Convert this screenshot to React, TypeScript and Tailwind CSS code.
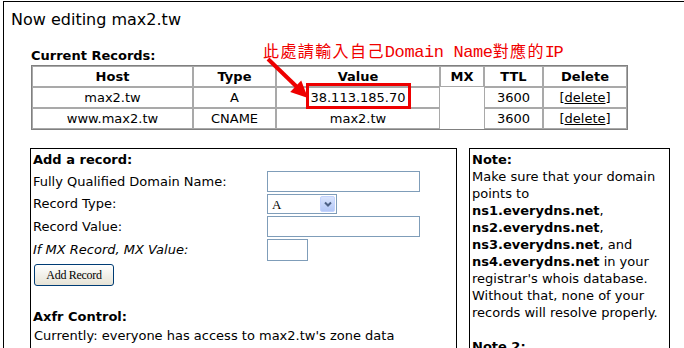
const cellBase = "border border-[#a9a9a9] h-[21px] p-0 text-center align-middle";

const records = [
  { host: "max2.tw", type: "A", value: "38.113.185.70", ttl: "3600" },
  { host: "www.max2.tw", type: "CNAME", value: "max2.tw", ttl: "3600" },
];

const noteLines: React.ReactNode[] = [
  <b>Note:</b>,
  "Make sure that your domain",
  "points to",
  <><b>ns1.everydns.net</b>,</>,
  <><b>ns2.everydns.net</b>,</>,
  <><b>ns3.everydns.net</b>, and</>,
  <><b>ns4.everydns.net</b> in your</>,
  "registrar's whois database.",
  "Without that, none of your",
  "records will resolve properly.",
  "\u00a0",
  <b>Note 2:</b>,
];

function SelectBox() {
  return (
    <div className="w-[70px] h-[20px] border border-[#7f9db9] bg-white flex items-center justify-between pl-[4px] pr-[1px]">
      <span className="font-['Liberation_Serif'] text-[13px] leading-none">A</span>
      <div className="w-[15px] h-[16px] rounded-[2px] bg-gradient-to-b from-[#d9e4fd] to-[#b4c8f7] border border-[#c3d3fd] flex items-center justify-center">
        <svg width="8" height="6" viewBox="0 0 8 6">
          <path d="M1 1.5 L4 4.5 L7 1.5" stroke="#4d6185" strokeWidth="2" fill="none" />
        </svg>
      </div>
    </div>
  );
}

function TextBox({ w, h }: { w: number; h: number }) {
  return (
    <div
      className="border border-[#7f9db9] bg-white"
      style={{ width: w, height: h }}
    />
  );
}

export default function App() {
  return (
    <div className="w-[684px] h-[348px] overflow-hidden bg-white relative font-['DejaVu_Sans',sans-serif] text-black">
      <div className="ml-[3px] mt-[1px] border-l border-t border-black h-[347px]">
        <h1 className="pl-[7px] pt-[8px] text-[16px] leading-[20px] font-normal">
          Now editing max2.tw
        </h1>

        <div className="pl-[27px] mt-[18px]">
          <div className="text-[13px] leading-[16px] font-bold">Current Records:</div>
          <table className="mt-[1px] table-fixed border-separate border-spacing-0 border border-[#808080] text-[13px] leading-[16px]">
            <thead>
              <tr>
                <th className={`${cellBase} w-[161px]`}>Host</th>
                <th className={`${cellBase} w-[83px]`}>Type</th>
                <th className={`${cellBase} w-[164px]`}>Value</th>
                <th className={`${cellBase} w-[44px]`}>MX</th>
                <th className={`${cellBase} w-[59px]`}>TTL</th>
                <th className={`${cellBase} w-[84px]`}>Delete</th>
              </tr>
            </thead>
            <tbody>
              {records.map((r) => (
                <tr key={r.host}>
                  <td className={cellBase}>{r.host}</td>
                  <td className={cellBase}>{r.type}</td>
                  <td className={cellBase}>{r.value}</td>
                  <td className="h-[21px] p-0"></td>
                  <td className={cellBase}>{r.ttl}</td>
                  <td className={cellBase}>
                    [<span className="underline">delete</span>]
                  </td>
                </tr>
              ))}
            </tbody>
          </table>
        </div>

        <div className="flex items-start gap-[12px] pl-[26px] mt-[18px] text-[13px] leading-[16px]">
          <div className="w-[427px] h-[220px] border border-black pl-[2px]">
            <div className="h-[21px] pt-[3px] font-bold">Add a record:</div>
            <div className="h-[23px] flex items-center">
              <div className="w-[234px]">Fully Qualified Domain Name:</div>
              <TextBox w={153} h={21} />
            </div>
            <div className="h-[22px] flex items-center">
              <div className="w-[234px]">Record Type:</div>
              <SelectBox />
            </div>
            <div className="h-[23px] flex items-center">
              <div className="w-[234px]">Record Value:</div>
              <TextBox w={153} h={21} />
            </div>
            <div className="h-[24px] flex items-center">
              <div className="w-[234px] italic">If MX Record, MX Value:</div>
              <TextBox w={41} h={22} />
            </div>
            <div className="h-[26px] pt-[2px] pl-[1px]">
              <button className="w-[80px] h-[22px] rounded-[3px] border border-[#003c74] bg-gradient-to-b from-white to-[#e6e3d6] font-['Liberation_Serif'] text-[12px] leading-none tracking-[-0.3px]">
                Add Record
              </button>
            </div>
            <div className="mt-[20px] leading-[18px] font-bold">Axfr Control:</div>
            <div className="leading-[19px] pl-[1px]">
              Currently: everyone has access to max2.tw's zone data
            </div>
          </div>

          <div className="w-[201px] h-[220px] border border-black pl-[2px] pt-[2px] leading-[17px] whitespace-nowrap">
            {noteLines.map((line, i) => (
              <div key={i}>{line}</div>
            ))}
          </div>
        </div>
      </div>

      {/* annotation */}
      <div className="absolute left-[263px] top-[41px] text-[#f00000] leading-[19px] whitespace-nowrap">
        <span className="font-['Noto_Sans_CJK_TC',sans-serif] text-[16px] tracking-[1.4px]">此處請輸入自己</span>
        <span className="font-['Liberation_Mono',monospace] text-[17px] tracking-[-0.4px]">Domain Name</span>
        <span className="font-['Noto_Sans_CJK_TC',sans-serif] text-[16px] tracking-[1.4px]">對應的</span>
        <span className="font-['Liberation_Mono',monospace] text-[17px] tracking-[-1.5px]">IP</span>
      </div>
      <div className="absolute left-[306px] top-[83px] w-[105px] h-[26px] border-[3px] border-[#ee0000]" />
      <svg className="absolute left-0 top-0" width="684" height="348" viewBox="0 0 684 348">
        <line x1="268" y1="59" x2="298" y2="88" stroke="#ee0000" strokeWidth="4" />
        <polygon points="308,98 290.2,92.1 301.2,80.5" fill="#ee0000" />
      </svg>
    </div>
  );
}
